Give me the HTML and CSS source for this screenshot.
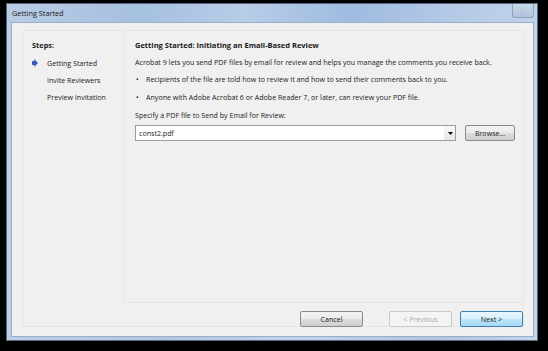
FILE: index.html
```html
<!DOCTYPE html>
<html>
<head>
<meta charset="utf-8">
<link rel="stylesheet" href="styles.css">
</head>
<body>
<div class="window">
  <div class="titlebar">
    <span class="title">Getting Started</span>
    <span class="close">&#x2715;</span>
  </div>
  <div class="client">
    <div class="panel">
      <div class="top">
        <div class="sidebar">
          <div class="steps-title">Steps:</div>
          <div class="step current">
            <svg class="arrow" width="6" height="8" viewBox="0 0 6 8"><path d="M0 2 H2.2 V0 L6 4 L2.2 8 V6 H0 Z" fill="#3b5cb8"/></svg>
            <span>Getting Started</span>
          </div>
          <div class="step"><span>Invite Reviewers</span></div>
          <div class="step"><span>Preview Invitation</span></div>
        </div>
        <div class="main">
          <div class="heading">Getting Started: Initiating an Email-Based Review</div>
          <p class="para">Acrobat 9 lets you send PDF files by email for review and helps you manage the comments you receive back.</p>
          <div class="bullet"><span class="dot">•</span><span>Recipients of the file are told how to review it and how to send their comments back to you.</span></div>
          <div class="bullet"><span class="dot">•</span><span>Anyone with Adobe Acrobat 6 or Adobe Reader 7, or later, can review your PDF file.</span></div>
          <p class="para specify">Specify a PDF file to Send by Email for Review:</p>
          <div class="filerow">
            <div class="combo">
              <span class="combo-text">const2.pdf</span>
              <span class="combo-btn"><svg width="5" height="3" viewBox="0 0 5 3"><path d="M0 0 H5 L2.5 3 Z" fill="#000"/></svg></span>
            </div>
            <button class="btn browse">Browse...</button>
          </div>
        </div>
      </div>
      <div class="footer">
        <button class="btn cancel">Cancel</button>
        <button class="btn prev" disabled>&lt; Previous</button>
        <button class="btn next">Next &gt;</button>
      </div>
    </div>
  </div>
</div>
</body>
</html>
```
FILE: styles.css
```css
* { box-sizing: border-box; }
html, body { margin: 0; padding: 0; }
body {
  width: 548px;
  height: 351px;
  background: #000;
  overflow: hidden;
  font-family: "Open Sans", "Noto Sans", sans-serif;
  font-size: 7.1px;
  color: #1a1a1a;
}
.window {
  margin: 3px 0 0 6px;
  width: 532px;
  height: 338px;
  border: 1px solid #5a6a7c;
  background: linear-gradient(90deg, #bccfe6 0%, #b0c8e6 30%, #c0d4ec 55%, #b0c6e3 80%, #c2d4ea 100%);
  display: flex;
  flex-direction: column;
}
.titlebar {
  height: 18px;
  display: flex;
  align-items: center;
  padding: 0 0 0 5px;
  background: linear-gradient(90deg, #b9cce4 0%, #a6c0e0 25%, #b7cde8 45%, #9fbbe0 65%, #b5cae6 85%, #c0d2ea 100%);
}
.title {
  flex: 1;
  color: #1a1a1a;
  font-size: 7.3px;
}
.close {
  width: 22px;
  height: 14px;
  margin: 0 3px 4px 0;
  border: 1px solid #8ea4bf;
  border-top: none;
  border-radius: 0 0 3px 3px;
  display: flex;
  align-items: center;
  justify-content: center;
  font-size: 6px;
  color: #fff;
  text-shadow: 0 0 1px #333;
  background: linear-gradient(180deg, #c9d8ea, #aec3dc);
}
.client {
  flex: 1;
  margin: 0 3px 3px 4px;
  background: #f0f0f0;
  border: 1px solid #9aaec6;
  padding: 7px 9px 9px 10px;
  display: flex;
}
.panel {
  flex: 1;
  border: 1px solid #e6e6e6;
  display: flex;
  flex-direction: column;
}
.top {
  flex: 1;
  display: flex;
}
.sidebar {
  width: 100px;
  padding: 8px 0 0 9px;
}
.steps-title {
  font-weight: 700;
  font-size: 7.4px;
  height: 12px;
  line-height: 12px;
  margin-bottom: 3px;
}
.step {
  display: flex;
  align-items: center;
  height: 17px;
  padding-left: 15px;
}
.step.current { padding-left: 0; }
.arrow { margin: 0 9px 0 0; }
.main {
  flex: 1;
  border-left: 1px solid #e6e6e6;
  border-bottom: 1px solid #e6e6e6;
  padding: 8px 0 0 11px;
}
.heading {
  font-weight: 700;
  font-size: 7.5px;
  height: 12px;
  line-height: 12px;
  margin-bottom: 5px;
}
.para {
  margin: 0;
  height: 17px;
  line-height: 12px;
}
.bullet {
  display: flex;
  height: 18px;
  line-height: 12px;
}
.dot { width: 11px; padding-left: 1px; }
.specify { height: 16px; }
.filerow {
  display: flex;
  align-items: center;
  gap: 9px;
}
.combo {
  width: 321px;
  height: 16px;
  background: #fff;
  border: 1px solid #9c9c9c;
  display: flex;
  align-items: center;
}
.combo-text { flex: 1; padding-left: 3px; }
.combo-btn {
  width: 11px;
  height: 14px;
  display: flex;
  align-items: center;
  justify-content: center;
  border-left: 1px solid #f0f0f0;
  background: linear-gradient(180deg, #fafafa, #e6e6e6);
}
.btn {
  font-family: inherit;
  font-size: 7.1px;
  color: #1a1a1a;
  height: 16px;
  padding: 0;
  border: 1px solid #8a8a8a;
  border-radius: 2px;
  background: linear-gradient(180deg, #f3f3f3 0%, #ebebeb 50%, #dddddd 51%, #cfcfcf 100%);
}
.browse { width: 50px; }
.footer {
  height: 23px;
  display: flex;
  justify-content: flex-end;
  align-items: flex-start;
  padding: 8px 0 0 0;
}
.cancel { width: 63px; margin-right: 26px; }
.prev {
  width: 63px;
  margin-right: 8px;
  color: #a8a8a8;
  border-color: #c8c8c8;
  background: #f4f4f4;
}
.next {
  width: 63px;
  border-color: #3c7fb1;
  background: linear-gradient(180deg, #eaf6fd 0%, #d9f0fc 50%, #bee6fd 51%, #a7d9f5 100%);
}
```
